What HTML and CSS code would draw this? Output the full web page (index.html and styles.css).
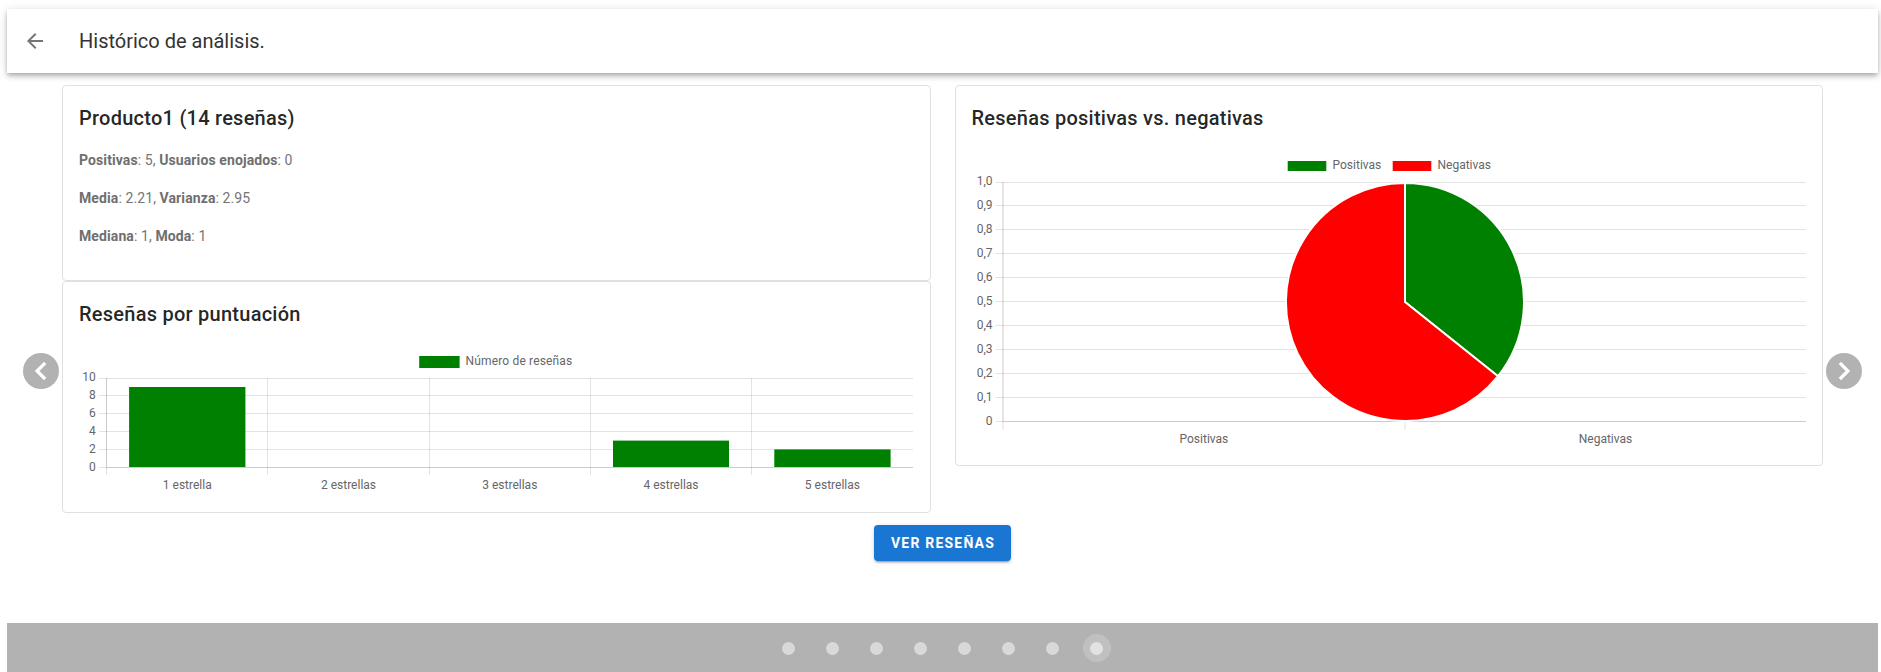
FILE: index.html
```html
<!DOCTYPE html>
<html lang="es">
<head>
<meta charset="utf-8">
<title>Histórico de análisis</title>
<link rel="stylesheet" href="styles.css">
</head>
<body>
<header class="toolbar">
  <svg class="back" viewBox="0 0 24 24"><path d="M20 11H7.83l5.59-5.59L12 4l-8 8 8 8 1.41-1.41L7.83 13H20z"/></svg>
  <h1 class="toolbar-title">Histórico de análisis.</h1>
</header>
<main class="carousel">
  <button class="arrow arrow-prev" aria-label="Anterior"><svg viewBox="0 0 24 24"><path d="M15.41,16.58L10.83,12L15.41,7.41L14,6L8,12L14,18L15.41,16.58Z"/></svg></button>
  <div class="slide">
    <div class="columns">
      <div class="column">
        <section class="card summary">
          <h2 class="card-title">Producto1 (14 reseñas)</h2>
          <div class="stats">
            <p><b>Positivas</b>: 5, <b>Usuarios enojados</b>: 0</p>
            <p><b>Media</b>: 2.21, <b>Varianza</b>: 2.95</p>
            <p><b>Mediana</b>: 1, <b>Moda</b>: 1</p>
          </div>
        </section>
        <section class="card">
          <h2 class="card-title">Reseñas por puntuación</h2>
          <svg class="chart bar-chart" viewBox="79 340 834.5 156">
            <path class="grid" d="M99 378.5H913M99 395.5H913M99 413.5H913M99 431.5H913M99 449.5H913M99 467.5H106M106.5 467V475M267.5 378V475M429.5 378V475M590.5 378V475M751.5 378V475"/>
            <path class="axis" d="M106.5 378V467M106 467.5H913"/>
            <g class="positive">
              <rect x="129.1" y="387" width="116.3" height="80"/>
              <rect x="613" y="440.6" width="116" height="26.4"/>
              <rect x="774.3" y="449.4" width="116.3" height="17.6"/>
              <rect x="419.2" y="356" width="40.4" height="12"/>
            </g>
            <text class="series-name" x="465.5" y="365">Número de reseñas</text>
            <g class="end">
              <text x="95.7" y="381">10</text><text x="95.7" y="399">8</text><text x="95.7" y="417">6</text><text x="95.7" y="435">4</text><text x="95.7" y="453">2</text><text x="95.7" y="471">0</text>
            </g>
            <g class="middle">
              <text x="187.3" y="489">1 estrella</text><text x="348.5" y="489">2 estrellas</text><text x="509.8" y="489">3 estrellas</text><text x="671" y="489">4 estrellas</text><text x="832.4" y="489">5 estrellas</text>
            </g>
          </svg>
        </section>
      </div>
      <div class="column">
        <section class="card">
          <h2 class="card-title">Reseñas positivas vs. negativas</h2>
          <svg class="chart pie-chart" viewBox="971.5 146 834.5 303">
            <path class="grid" d="M995 182.5H1806M995 205.5H1806M995 229.5H1806M995 253.5H1806M995 277.5H1806M995 301.5H1806M995 325.5H1806M995 349.5H1806M995 373.5H1806M995 397.5H1806M995 421.5H1002M1002.5 421V430M1404.5 182V430"/>
            <path class="axis" d="M1002.5 182V421M1002 421.5H1806"/>
            <g class="slices">
              <path class="positive" d="M1404.5 302V183A119 119 0 0 1 1497.5 376.2Z"/>
              <path class="negative" d="M1404.5 302L1497.5 376.2A119 119 0 1 1 1404.5 183Z"/>
            </g>
            <rect class="positive" x="1287.2" y="161" width="38.6" height="10"/>
            <rect class="negative" x="1392.2" y="161" width="38.6" height="10"/>
            <g class="legend"><text x="1332" y="169">Positivas</text><text x="1437" y="169">Negativas</text></g>
            <g class="end">
              <text x="992" y="185">1,0</text><text x="992" y="209">0,9</text><text x="992" y="233">0,8</text><text x="992" y="257">0,7</text><text x="992" y="281">0,6</text><text x="992" y="305">0,5</text><text x="992" y="329">0,4</text><text x="992" y="353">0,3</text><text x="992" y="377">0,2</text><text x="992" y="401">0,1</text><text x="992" y="425">0</text>
            </g>
            <g class="middle"><text x="1203.4" y="443">Positivas</text><text x="1605" y="443">Negativas</text></g>
          </svg>
        </section>
      </div>
    </div>
    <button class="action">Ver reseñas</button>
  </div>
  <button class="arrow arrow-next" aria-label="Siguiente"><svg viewBox="0 0 24 24"><path d="M8.59,16.58L13.17,12L8.59,7.41L10,6L16,12L10,18L8.59,16.58Z"/></svg></button>
</main>
<footer class="dots">
  <span class="dot"></span><span class="dot"></span><span class="dot"></span><span class="dot"></span><span class="dot"></span><span class="dot"></span><span class="dot"></span><span class="dot active"></span>
</footer>
</body>
</html>
```
FILE: styles.css
```css
* { box-sizing: border-box; margin: 0; padding: 0; }
body {
  height: 672px;
  padding: 9px 3px 0 7px;
  overflow: hidden;
  display: flex;
  flex-direction: column;
  background: #fff;
  color: rgba(0, 0, 0, .87);
  font-family: Roboto, sans-serif;
}
button { border: 0; font-family: inherit; }
.toolbar {
  flex: none;
  height: 64px;
  padding: 0 16px;
  display: flex;
  align-items: center;
  gap: 32px;
  background: #fff;
  box-shadow: 0 2px 4px -1px rgba(0,0,0,.2), 0 4px 5px rgba(0,0,0,.14), 0 1px 10px rgba(0,0,0,.12);
}
.back { width: 24px; height: 24px; fill: rgba(0,0,0,.54); }
.toolbar-title { font-size: 20px; font-weight: 400; line-height: 30px; color: #333; }
.carousel { flex: none; height: 550px; display: flex; padding: 12px 16px 0; }
.arrow {
  flex: none;
  width: 36px;
  height: 36px;
  margin-top: 268px;
  border-radius: 50%;
  background: #b2b2b2;
  display: flex;
  align-items: center;
  justify-content: center;
}
.arrow svg { flex: none; width: 36px; height: 36px; fill: #fff; stroke: #fff; stroke-width: .3; }
.slide { flex: 1; padding: 0 3px; display: flex; flex-direction: column; align-items: center; }
.columns { width: 100%; display: flex; gap: 24px; align-items: flex-start; }
.column { flex: 1; min-width: 0; }
.card { border: 1px solid #e0e0e0; border-radius: 4px; padding: 16px; background: #fff; }
.summary { height: 196px; }
.card-title { font-size: 20px; font-weight: 500; line-height: 32px; letter-spacing: .25px; }
.stats { padding-top: 15px; display: grid; gap: 16px; font-size: 14px; line-height: 22px; letter-spacing: .1px; color: #757575; }
.stats b { font-weight: 700; color: #6f6f6f; }
.chart { display: block; width: 100%; font-size: 12px; }
.chart text { fill: #666; }
.chart .series-name { letter-spacing: .16px; }
.bar-chart { height: 156px; margin-top: 10px; }
.pie-chart { height: 303px; margin-top: 12px; }
.grid { stroke: rgba(0,0,0,.11); fill: none; }
.axis { stroke: rgba(0,0,0,.2); fill: none; }
.positive { fill: green; }
.negative { fill: red; }
.slices { stroke: #fff; stroke-width: 2; stroke-linejoin: round; }
.end { text-anchor: end; }
.middle { text-anchor: middle; }
.action {
  height: 36px;
  width: 137px;
  margin-top: 12px;
  padding-left: 1px;
  border-radius: 4px;
  background: #1976d2;
  color: #fff;
  font-size: 14px;
  font-weight: 700;
  letter-spacing: 1.2px;
  text-transform: uppercase;
  box-shadow: 0 3px 1px -2px rgba(0,0,0,.2), 0 2px 2px rgba(0,0,0,.14), 0 1px 5px rgba(0,0,0,.12);
}
.dots { flex: none; height: 49px; padding-top: 1px; display: flex; gap: 16px; justify-content: center; align-items: center; background: #b2b2b2; }
.dot { width: 28px; height: 28px; border-radius: 50%; display: flex; align-items: center; justify-content: center; }
.dot::before { content: ""; width: 13px; height: 13px; border-radius: 50%; background: #d9d9d9; }
.active { background: #c0c0c0; }
.active::before { background: #e2e2e2; }
```
